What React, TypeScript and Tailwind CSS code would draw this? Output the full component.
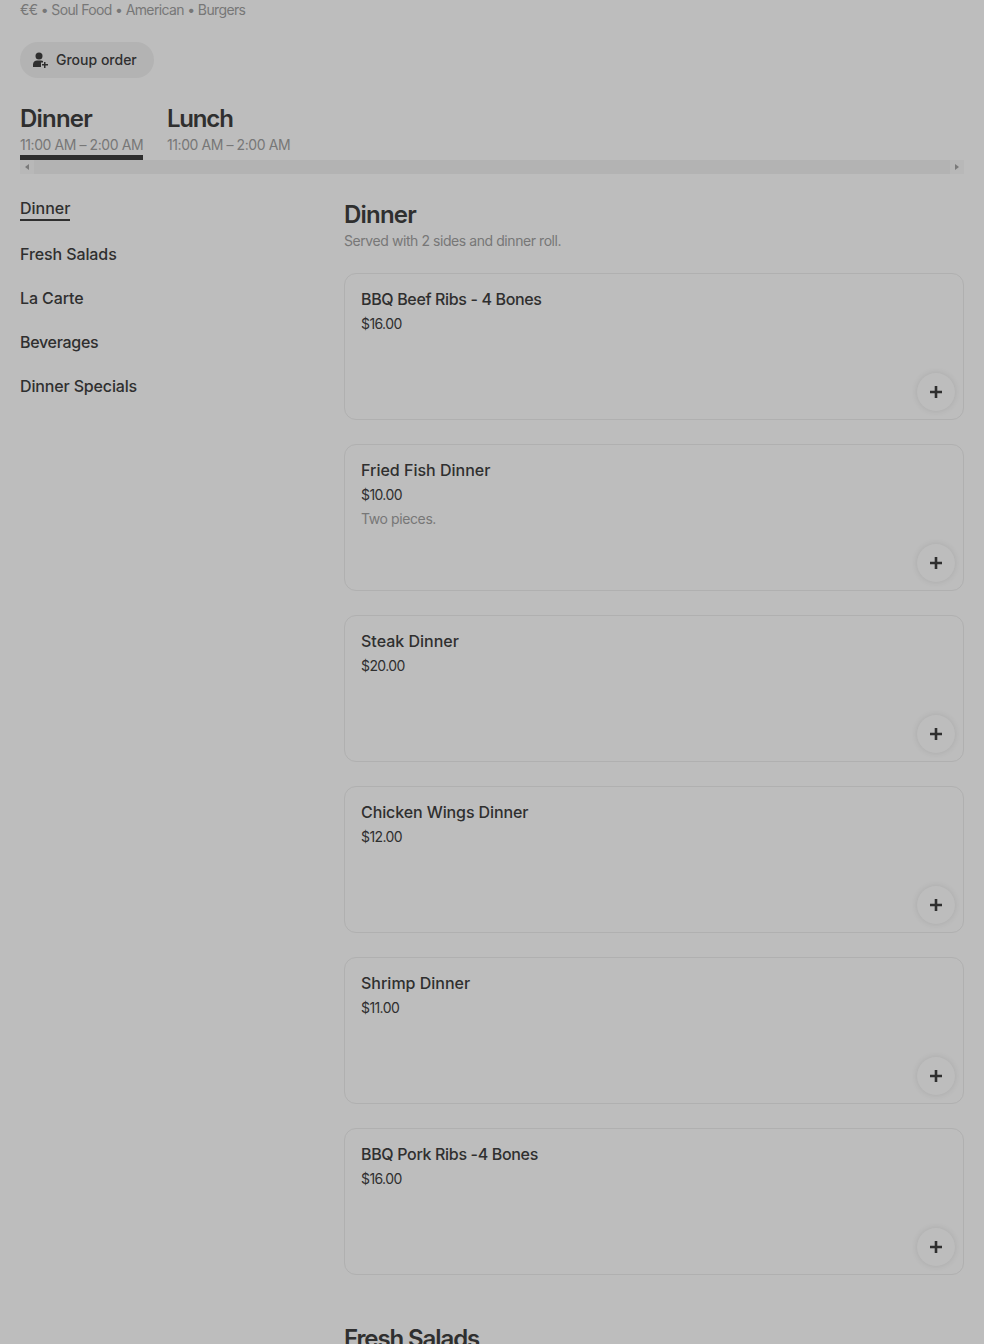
const items = [
  { name: "BBQ Beef Ribs - 4 Bones", price: "$16.00", track: "tracking-[-0.35px]" },
  { name: "Fried Fish Dinner", price: "$10.00", desc: "Two pieces.", track: "tracking-normal" },
  { name: "Steak Dinner", price: "$20.00", track: "tracking-normal" },
  { name: "Chicken Wings Dinner", price: "$12.00", track: "tracking-[-0.1px]" },
  { name: "Shrimp Dinner", price: "$11.00", track: "tracking-normal" },
  { name: "BBQ Pork Ribs -4 Bones", price: "$16.00", track: "tracking-[-0.33px]" },
];
const cats = [
  { label: "Fresh Salads", track: "tracking-[-0.1px]" },
  { label: "La Carte", track: "tracking-[-0.1px]" },
  { label: "Beverages", track: "tracking-[-0.3px]" },
  { label: "Dinner Specials", track: "tracking-[-0.15px]" },
];

function Card({ name, price, desc, track }: { name: string; price: string; desc?: string; track: string }) {
  return (
    <div className="relative h-[147px] rounded-[12px] border border-[#b0b0b0] px-4 pt-[15px]">
      <div className={`text-[16px] leading-[20px] font-medium text-[#2f2f2f] ${track}`}>{name}</div>
      <div className="mt-[5px] text-[14px] leading-[20px] tracking-[-0.6px] text-[#2f2f2f]">{price}</div>
      {desc && <div className="mt-1 text-[14px] leading-[20px] tracking-[-0.4px] text-[#777777]">{desc}</div>}
      <div className="absolute right-[8px] bottom-[8px] flex h-[38px] w-[38px] items-center justify-center rounded-full bg-[#bdbdbd] shadow-[0_0_6px_rgba(0,0,0,0.1)]">
        <svg width="14" height="14" viewBox="0 0 14 14" fill="#2f2f2f"><path d="M5.700 1h2.600v4.700H13v2.600H8.300V13H5.700V8.300H1V5.700h4.700z" /></svg>
      </div>
    </div>
  );
}

export default function App() {
  return (
    <div className="h-[1344px] overflow-hidden bg-[#bdbdbd] px-5 font-['Inter',sans-serif] text-[#2f2f2f]">
      <div className="text-[14px] leading-[20px] tracking-[-0.62px] text-[#777777]">€€ • Soul Food • American • Burgers</div>
      <div className="mt-[22px] flex h-9 w-[134px] items-center gap-2 rounded-full bg-[#b3b3b3] pl-3">
        <svg width="16" height="16" viewBox="0 0 16 16" fill="#2f2f2f">
          <circle cx="7" cy="4" r="3.500" />
          <path d="M1 15v-2.500C1 10 3 8.500 5 8.500h4c.8 0 1.500.2 2 .5v1.500H9V15z" />
          <path d="M12 10h1.500v2H16v1.500h-2.500V16H12v-2.500H10V12h2z" />
        </svg>
        <span className="text-[14px] leading-[20px] font-medium">Group order</span>
      </div>
      <div className="mt-[25px] flex gap-6">
        <div className="h-[57px] w-[123px] border-b-[5px] border-[#2f2f2f]">
          <div className="text-[24px] leading-[32px] font-semibold tracking-[-0.8px]">Dinner</div>
          <div className="text-[14px] leading-[20px] tracking-[-0.42px] text-[#777777] whitespace-nowrap">11:00 AM – 2:00 AM</div>
        </div>
        <div className="h-[57px] w-[123px]">
          <div className="text-[24px] leading-[32px] font-semibold tracking-[-1.2px]">Lunch</div>
          <div className="text-[14px] leading-[20px] tracking-[-0.42px] text-[#777777] whitespace-nowrap">11:00 AM – 2:00 AM</div>
        </div>
      </div>
      <div className="flex h-[14px] items-center justify-between bg-[#b3b3b3]">
        <div className="flex h-[14px] w-[14px] items-center justify-center bg-[#b8b8b8]">
          <div className="h-0 w-0 border-y-[3px] border-r-[4px] border-y-transparent border-r-[#7a7a7a]" />
        </div>
        <div className="flex h-[14px] w-[14px] items-center justify-center bg-[#b8b8b8]">
          <div className="h-0 w-0 border-y-[3px] border-l-[4px] border-y-transparent border-l-[#7a7a7a]" />
        </div>
      </div>
      <div className="mt-[24px] flex">
        <div className="w-[324px] shrink-0">
          <div className="flex flex-col items-start">
            <div className="-mt-px border-b-2 border-[#2f2f2f] text-[16px] leading-[22px] font-medium">Dinner</div>
            {cats.map((c) => (
              <div key={c.label} className={`mt-[22px] text-[16px] leading-[22px] font-medium ${c.track}`}>{c.label}</div>
            ))}
          </div>
        </div>
        <div className="flex-1">
          <div className="mt-px text-[24px] leading-[32px] font-semibold tracking-[-0.8px]">Dinner</div>
          <div className="text-[14px] leading-[20px] tracking-[-0.43px] text-[#777777]">Served with 2 sides and dinner roll.</div>
          <div className="mt-[22px] flex flex-col gap-6">
            {items.map((it) => <Card key={it.name} {...it} />)}
          </div>
          <div className="mt-[48px] text-[24px] leading-[32px] font-semibold tracking-[-1.1px]">Fresh Salads</div>
        </div>
      </div>
    </div>
  );
}
